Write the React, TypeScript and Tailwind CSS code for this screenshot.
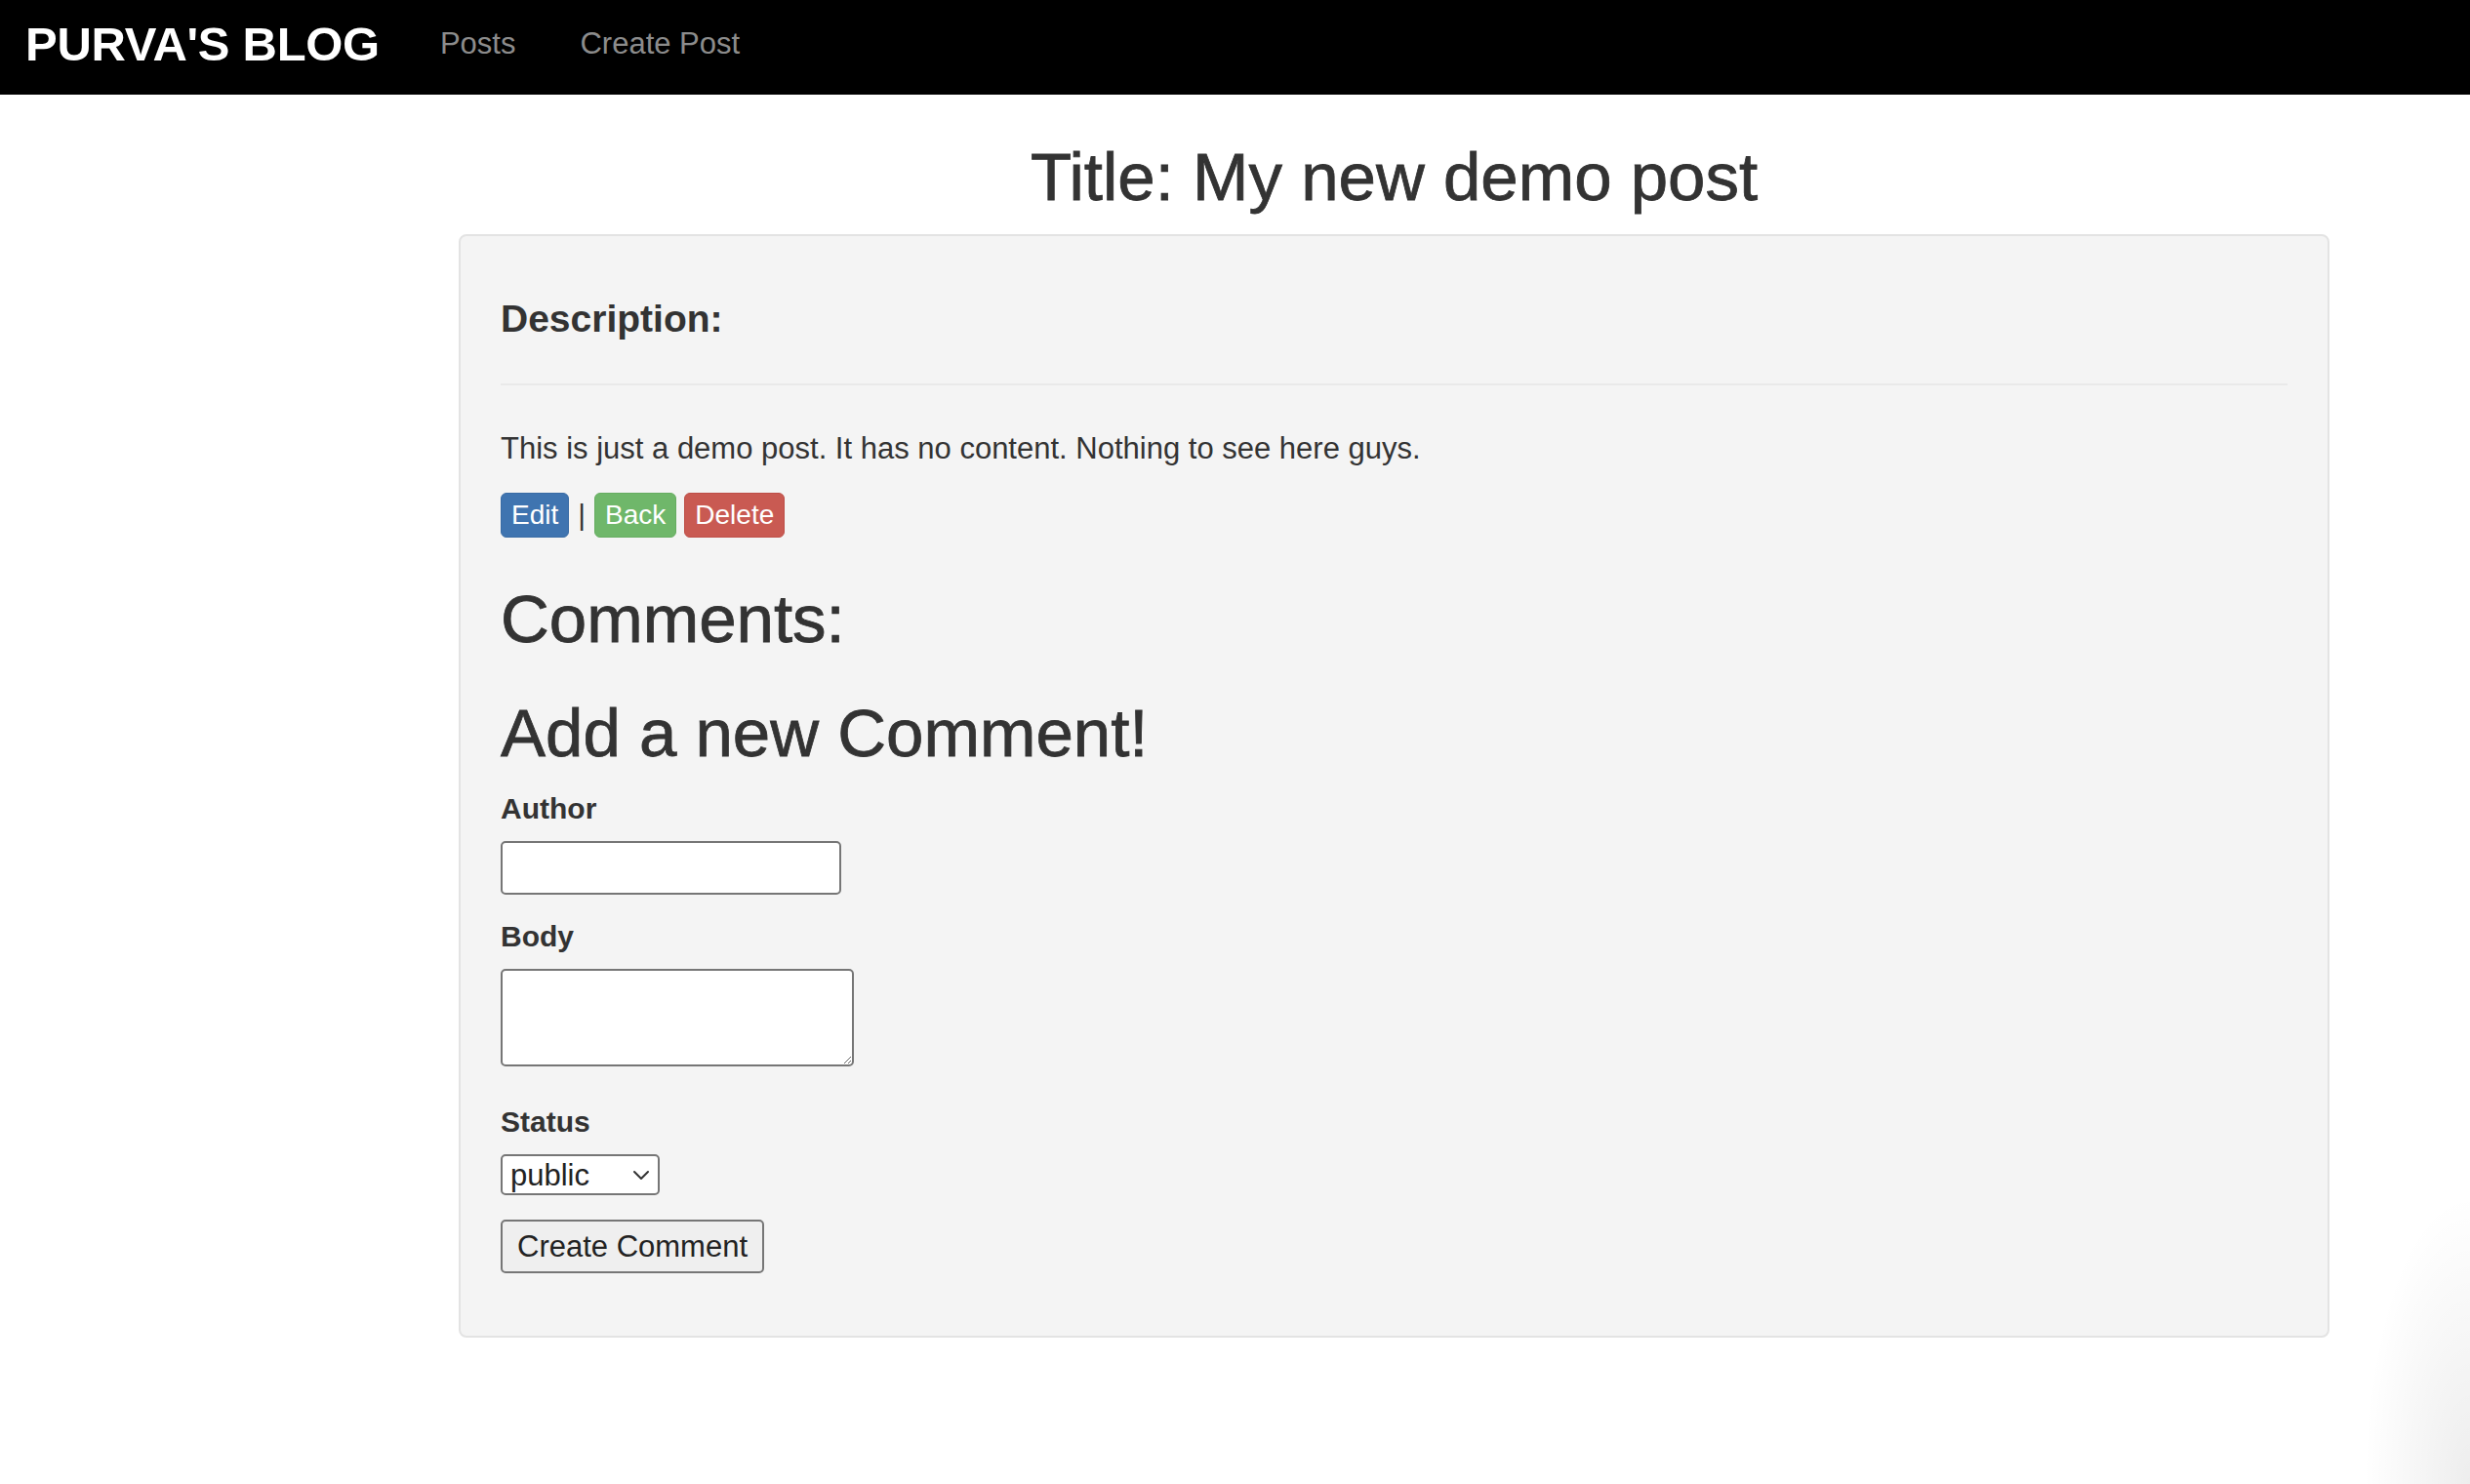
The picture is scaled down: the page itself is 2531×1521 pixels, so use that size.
import React from "react";

const font = { fontFamily: '"Liberation Sans", Arial, Helvetica, sans-serif' };

function NavBar() {
  return (
    <nav className="h-[97px] bg-black flex items-center pl-[26px] pb-[6px]">
      <a className="text-white font-bold text-[49px] leading-none tracking-[-0.3px]">PURVA'S BLOG</a>
      <div className="flex items-center gap-[66px] ml-[62px] text-[31px] text-[#8c8c8c]">
        <a>Posts</a>
        <a>Create Post</a>
      </div>
    </nav>
  );
}

function ActionButtons() {
  return (
    <div className="mt-[24px] flex items-center h-[46px] text-[28px] text-white">
      <button className="h-[46px] px-[10px] rounded-[6px] bg-[#3f74b0] border border-[#3a6ca5] leading-none">Edit</button>
      <span className="mx-[9px] text-[#333] text-[30px] leading-none">|</span>
      <button className="h-[46px] px-[10px] rounded-[6px] bg-[#6fb76a] border border-[#66ad61] leading-none">Back</button>
      <button className="ml-[8px] h-[46px] px-[10px] rounded-[6px] bg-[#c95a52] border border-[#be4f48] leading-none">Delete</button>
    </div>
  );
}

function CommentForm() {
  return (
    <form className="flex flex-col items-start" onSubmit={(e) => e.preventDefault()}>
      <label className="mt-[17px] text-[30px] font-bold leading-[43px]">Author</label>
      <input
        type="text"
        className="mt-[12px] w-[349px] h-[55px] bg-white border-2 border-[#767676] rounded-[5px] px-2 text-[28px]"
      />
      <label className="mt-[21px] text-[30px] font-bold leading-[43px]">Body</label>
      <textarea className="mt-[12px] w-[362px] h-[100px] bg-white border-2 border-[#767676] rounded-[5px] px-2 text-[28px] block" />
      <label className="mt-[35px] text-[30px] font-bold leading-[43px]">Status</label>
      <div className="mt-[12px] w-[163px] h-[42px] bg-white border-2 border-[#767676] rounded-[5px] flex items-center justify-between pl-[8px] pr-[8px]">
        <span className="text-[31px] text-[#222] leading-none">public</span>
        <svg width="18" height="12" viewBox="0 0 18 12" fill="none">
          <path d="M2 3l7 7 7-7" stroke="#333" strokeWidth="2" strokeLinecap="round" strokeLinejoin="round" />
        </svg>
      </div>
      <button
        type="submit"
        className="mt-[25px] h-[55px] px-[15px] bg-[#efefef] border-2 border-[#767676] rounded-[5px] text-[31px] text-[#222] leading-none"
      >
        Create Comment
      </button>
    </form>
  );
}

export default function App() {
  return (
    <div className="relative min-h-[1521px] bg-white text-[#333] overflow-hidden" style={font}>
      <NavBar />
      <main className="pl-[470px] pr-[144px]">
        <h1 className="mt-[47px] text-center text-[69px] font-medium leading-[76px] [-webkit-text-stroke:0.8px_#333]">
          Title: My new demo post
        </h1>
        <div className="mt-[20px] bg-[#f4f4f4] border-2 border-[#e3e3e3] rounded-[8px] px-[41px] pt-[63px] pb-[64px]">
          <h3 className="text-[39px] font-bold leading-[43px]">Description:</h3>
          <hr className="mt-[45px] border-t-2 border-[#e9e9e9]" />
          <p className="mt-[43px] text-[31px] leading-[43px]">
            This is just a demo post. It has no content. Nothing to see here guys.
          </p>
          <ActionButtons />
          <h1 className="mt-[46px] text-[69px] font-medium leading-[76px] [-webkit-text-stroke:0.8px_#333]">Comments:</h1>
          <h1 className="mt-[41px] text-[69px] font-medium leading-[76px] [-webkit-text-stroke:0.8px_#333]">
            Add a new Comment!
          </h1>
          <CommentForm />
        </div>
      </main>
      {/* corner shading from the screen edge */}
      <div className="absolute right-0 bottom-0 w-[110px] h-[300px] bg-[radial-gradient(ellipse_at_100%_100%,rgba(0,0,0,0.07),rgba(0,0,0,0)_70%)]" />
    </div>
  );
}
